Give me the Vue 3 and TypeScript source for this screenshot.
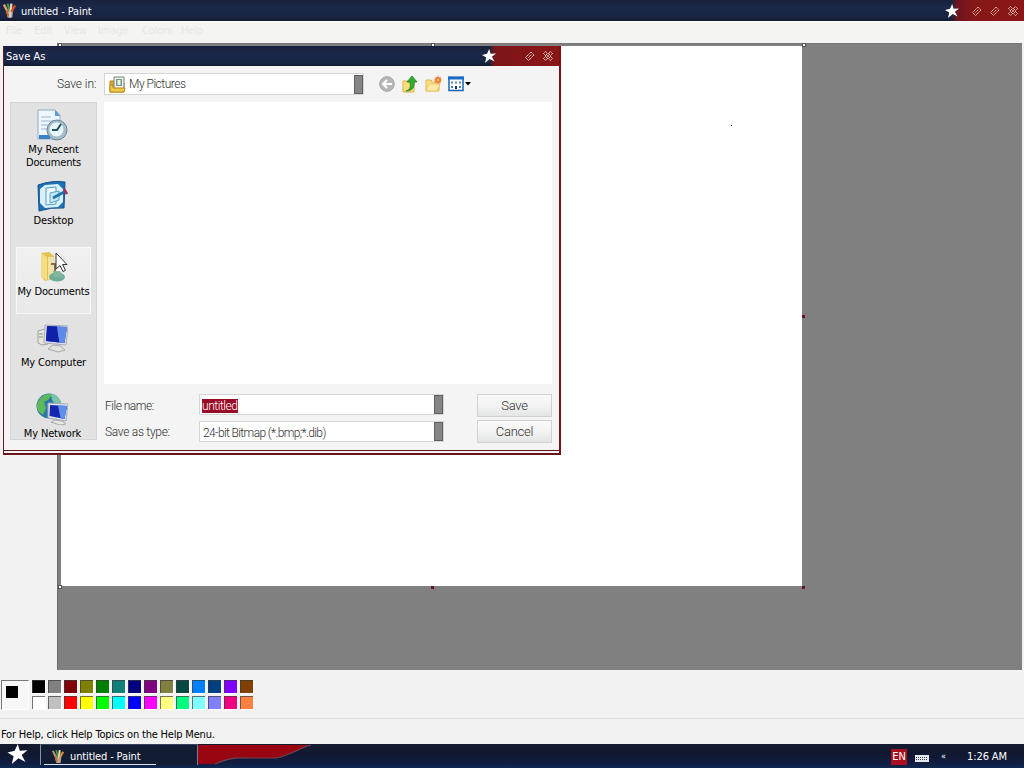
<script setup lang="ts">
interface Place {
  id: string
  lines: string[]
}

const menus: { label: string; cls: string }[] = [
  { label: 'File', cls: 'm-file' },
  { label: 'Edit', cls: 'm-edit' },
  { label: 'View', cls: 'm-view' },
  { label: 'Image', cls: 'm-image' },
  { label: 'Colors', cls: 'm-colors' },
  { label: 'Help', cls: 'm-help' },
]

const places: Place[] = [
  { id: 'recent', lines: ['My Recent', 'Documents'] },
  { id: 'desktop', lines: ['Desktop'] },
  { id: 'documents', lines: ['My Documents'] },
  { id: 'computer', lines: ['My Computer'] },
  { id: 'network', lines: ['My Network'] },
]

const palette: string[] = [
  '#000000', '#808080', '#800008', '#808000', '#008000', '#108078', '#000080',
  '#800080', '#808040', '#084840', '#0080ff', '#004080', '#8000ff', '#804000',
  '#ffffff', '#c0c0c0', '#ff0000', '#ffff00', '#00ff00', '#00ffff', '#0000ff',
  '#ff00ff', '#ffff80', '#00ff80', '#80ffff', '#8080ff', '#f00080', '#ff8040',
]

const handles: string[] = ['nw', 'n', 'ne', 'e', 'se', 's', 'sw']

const starPath = 'M7.200 0L8.600 4.800L14 4.400L9.900 7.700L12.600 12.600L7.700 10L3 14L4.300 8.600L0 6L5 4.800Z'
</script>

<template>
  <div class="screen">
    <header class="titlebar">
      <svg class="app-icon" viewBox="0 0 14 17">
        <path d="M3 8h8l-1 8H5z" fill="#b9a99a" />
        <path d="M6 9h3v7H6z" fill="#d8d0c4" />
        <path d="M1 2l4 8" stroke="#e0a060" stroke-width="2.500" />
        <path d="M5 1l2 9" stroke="#3f9a58" stroke-width="2" />
        <path d="M9 1L8 10" stroke="#e8d8a8" stroke-width="2.500" />
        <path d="M13 3L9 10" stroke="#e04828" stroke-width="2.500" />
        <path d="M4 8l2 7" stroke="#c86838" stroke-width="2" />
      </svg>
      <span class="title-text">untitled - Paint</span>
      <div class="caption">
        <svg class="star" viewBox="0 0 14 14"><path :d="starPath" fill="#fff" /></svg>
        <svg class="cap" viewBox="0 0 10 10"><path d="M.5 6.500l5.500-5.500 3 3L3.500 9.500zM3.500 6.500l3-3" fill="none" stroke="#f0c8b4" stroke-dasharray="1.500 .5" /></svg>
        <svg class="cap" viewBox="0 0 10 10"><path d="M.5 6.500l5.500-5.500 3 3L3.500 9.500zM3.500 6.500l3-3" fill="none" stroke="#f0c8b4" stroke-dasharray="1.500 .5" /></svg>
        <svg class="cap" viewBox="0 0 10 10"><path d="M.5 2.500l2-2L5 3 7.500.5l2 2L7 5l2.500 2.500-2 2L5 7 2.500 9.500l-2-2L3 5zM3 3l4 4M7 3L3 7" fill="none" stroke="#f4d4c4" stroke-dasharray="1.500 .5" /></svg>
      </div>
    </header>

    <nav class="menubar">
      <span v-for="m in menus" :key="m.label" :class="m.cls">{{ m.label }}</span>
    </nav>

    <main class="workspace">
      <div class="canvas">
        <i v-for="h in handles" :key="h" class="handle" :class="h"></i>
        <i class="speck"></i>
      </div>
    </main>

    <section class="colorbox">
      <div class="current"><i></i></div>
      <div class="swatches">
        <i v-for="c in palette" :key="c" :style="{ backgroundColor: c }"></i>
      </div>
    </section>

    <footer class="status"><span>For Help, click Help Topics on the Help Menu.</span></footer>

    <div class="taskbar">
      <div class="start">
        <svg class="start-star" viewBox="0 0 14 14"><path :d="starPath" fill="#fff" /></svg>
      </div>
      <div class="task">
        <svg class="app-icon" viewBox="0 0 14 17">
          <path d="M3 8h8l-1 8H5z" fill="#b9a99a" />
          <path d="M1 2l4 8" stroke="#c09070" stroke-width="2.500" />
          <path d="M5 1l2 9" stroke="#3f9a58" stroke-width="2" />
          <path d="M9 1L8 10" stroke="#e8d8a8" stroke-width="2.500" />
          <path d="M13 3L9 10" stroke="#d09040" stroke-width="2.500" />
          <path d="M4 8l2 7" stroke="#c86838" stroke-width="2" />
        </svg>
        <span>untitled - Paint</span>
      </div>
      <svg class="ribbon" viewBox="0 0 120 24">
        <path d="M0 1h113C101 4 93 11 78 14H50C34 13 26 16 17 20H0z" fill="#990611" />
        <path d="M113 1C101 4 93 11 78 14H50C34 13 26 16 17 20" fill="none" stroke="#6f4354" stroke-width="1.200" />
      </svg>
      <div class="tray">
        <span class="lang">EN</span>
        <svg class="kbd" viewBox="0 0 14 8"><path d="M0 1h14v7H0z" fill="#e6e8ee" /><path d="M1 3.500h12M1 5.500h12" stroke="#333a50" stroke-dasharray="1 1" /></svg>
        <span class="chev">«</span>
        <span class="clock">1:26 AM</span>
      </div>
    </div>

    <div class="dialog">
      <header class="dlg-title">
        <span>Save As</span>
        <div class="dlg-caption">
          <svg class="star" viewBox="0 0 14 14"><path :d="starPath" fill="#fff" /></svg>
          <svg class="cap" viewBox="0 0 10 10"><path d="M.5 6.500l5.500-5.500 3 3L3.500 9.500zM3.500 6.500l3-3" fill="none" stroke="#fbe6da" stroke-dasharray="1.500 .5" /></svg>
          <svg class="cap" viewBox="0 0 10 10"><path d="M.5 2.500l2-2L5 3 7.500.5l2 2L7 5l2.500 2.500-2 2L5 7 2.500 9.500l-2-2L3 5zM3 3l4 4M7 3L3 7" fill="none" stroke="#fbeae0" stroke-dasharray="1.500 .5" /></svg>
        </div>
      </header>
      <div class="dlg-body">
        <div class="look-row">
          <label class="save-in">Save in:</label>
          <div class="combo look">
            <svg class="pics" viewBox="0 0 17 17">
              <path d="M1 5h4l1 2h9v9H1z" fill="#d8a92e" stroke="#b98716" />
              <path d="M5 1h10v12H5z" fill="#f3f4e6" stroke="#758078" />
              <path d="M7 3h6v7H7z" fill="#6f9a98" />
              <path d="M8.500 4h3v5h-3z" fill="#eef4e2" />
              <path d="M1 16V9h3v3h12l-1 4z" fill="#eecb48" stroke="#b98716" />
            </svg>
            <span>My Pictures</span>
            <i class="drop"></i>
          </div>
          <div class="tools">
            <svg viewBox="0 0 18 18"><circle cx="9" cy="9" r="7.300" fill="#b8b8b8" stroke="#a2a2a2" /><path d="M14 9H6M9 5L5 9l4 4" fill="none" stroke="#fff" stroke-width="2" /></svg>
            <svg viewBox="0 0 18 18"><path d="M2 6h5l1 2h5v9H2z" fill="#f7df7c" stroke="#dcae4c" /><path d="M5 16c4-1 5-4 4-9H6l5-6 5 6h-3c1 5-2 9-8 9z" fill="#35ad32" stroke="#187e20" stroke-width=".8" /></svg>
            <svg viewBox="0 0 18 18"><path d="M2 5h5l1 2h7v9H2z" fill="#f8de86" stroke="#e0b452" /><path d="M2 16l3-7h11l-3 7z" fill="#fdeaa2" stroke="#e8bd5c" stroke-width=".7" /><circle cx="14" cy="5" r="3" fill="#f07838" /><path d="M14 .5v9M9.500 5h9M11 2l6 6M17 2l-6 6" stroke="#f07838" stroke-width=".8" /><circle cx="14" cy="5" r="1.200" fill="#ffd060" /></svg>
            <svg class="views" viewBox="0 0 24 18"><path d="M2 2.500h14v13H2z" fill="#fff" stroke="#1865bb" stroke-width="1.500" /><path d="M1 1.500h16v3H1z" fill="#176ac6" /><path d="M4 6.500h2v2H4zM8 6.500h2v2H8zM12 6.500h2v2h-2zM4 11h2v2H4zM12 11h2v2h-2z" fill="#5888a4" /><path d="M8 11h2v3H8z" fill="#1828a0" /><path d="M18 7h6l-3 3.500z" fill="#000" /></svg>
          </div>
        </div>

        <div class="middle">
          <aside class="places">
            <div v-for="p in places" :key="p.id" class="place" :class="p.id">
              <svg v-if="p.id === 'recent'" viewBox="0 0 32 32">
                <path d="M2 1h17l5 5v24H2z" fill="#eef6ff" stroke="#91acc9" />
                <path d="M19 1v6h5z" fill="#5c9bd3" />
                <path d="M5 8h10M5 12h14M5 16h8M5 20h7" stroke="#b9cbe0" stroke-width="1.500" />
                <path d="M3 26h11v4H3z" fill="#3b82ca" />
                <circle cx="21" cy="21" r="10" fill="#a5bcc8" stroke="#6f8494" />
                <circle cx="20.500" cy="20.500" r="7.500" fill="#e8f5f9" stroke="#9fbcc8" />
                <path d="M25 15l-4 6h-5" fill="none" stroke="#22535e" stroke-width="2" />
              </svg>
              <svg v-else-if="p.id === 'desktop'" viewBox="0 0 32 32">
                <path d="M2 5q14-5 27-3l-1 26q-13-1-25 3z" fill="#1e70b5" stroke="#174f8a" />
                <path d="M4 9l5-4 13-1 5 5v13l-5 5-13 1-5-5z" fill="#d8f1fc" />
                <path d="M10 8l10-1v17l-10 1z" fill="#eefaff" stroke="#4e9bc9" />
                <path d="M14 13l9-2v9l-9 3z" fill="#c4e8f4" stroke="#5ba3c8" />
                <path d="M17 18l11-6" stroke="#2273a8" stroke-width="3" />
                <path d="M28 9l3 5" stroke="#a32e5c" stroke-width="2.500" />
              </svg>
              <svg v-else-if="p.id === 'documents'" viewBox="0 0 32 32">
                <path d="M5 2l8-1 5 4v23l-9 2-4-5z" fill="#e3c052" />
                <path d="M5 2l6 4v24l-6-5z" fill="#f5dd84" />
                <path d="M12 6h8v20l-8 3z" fill="#f2e3a3" />
                <path d="M18 6h10v15H18z" fill="#f6f7f4" stroke="#d9dbd6" />
                <path d="M15 13h4v9" fill="none" stroke="#8a6a4c" stroke-width="2" />
                <ellipse cx="21" cy="26" rx="8" ry="4.500" fill="#6fae98" />
                <path d="M17 20h7l3 6h-9z" fill="#85b79e" />
              </svg>
              <svg v-else-if="p.id === 'computer'" viewBox="0 0 32 32">
                <path d="M2 9l7-2 3 2v13l-6 1-4-2z" fill="#e6e5da" stroke="#a3a39b" />
                <path d="M3 12h4M3 15h4" stroke="#888" />
                <path d="M9 3l23 1-2 19-22-2z" fill="#dcdfe8" stroke="#a8adbb" />
                <path d="M11 4l20 1-2.500 16L10 19z" fill="#1c3fca" />
                <path d="M20 4.500l11 .5-2.500 16-5-.500z" fill="#5f8be8" />
                <path d="M11 4l10 .500 2 16L10 19z" fill="#1020a8" />
                <path d="M17 23l7 1 5 4-7 2-10-3z" fill="#e4e4de" stroke="#aaa" />
              </svg>
              <svg v-else viewBox="0 0 32 32">
                <circle cx="13" cy="13" r="12.500" fill="#2a78a8" />
                <path d="M3 7C7 1 13 0 16 2l-4 5-4 2 2 6-3 7C1 19-1 13 3 7z" fill="#5eb85c" />
                <path d="M15 1c5 0 9 5 10 9l-6 1-3-4z" fill="#7cc4a8" />
                <path d="M12 10l20 1-2 17-18-3z" fill="#dfe3ec" stroke="#a5aab7" />
                <path d="M14 12l17 1-2.500 13-15-3z" fill="#1228b0" />
                <path d="M22 12.500l9 .500-2.500 13-4-1z" fill="#5f8fe8" />
                <path d="M19 27l7 1 4 3-6 1-9-3z" fill="#e8e8df" stroke="#aaa" />
              </svg>
              <span v-for="l in p.lines" :key="l">{{ l }}</span>
            </div>
          </aside>
          <div class="right">
            <div class="filelist"></div>
            <div class="form">
              <div class="labels"><label class="l-name">File name:</label><label class="l-type">Save as type:</label></div>
              <div class="fields">
                <div class="combo"><mark>untitled</mark><i class="drop"></i></div>
                <div class="combo type"><span>24-bit Bitmap (*.bmp;*.dib)</span><i class="drop"></i></div>
              </div>
              <div class="buttons"><button>Save</button><button>Cancel</button></div>
            </div>
          </div>
        </div>
      </div>
    </div>

    <svg class="cursor" viewBox="0 0 13 21"><path d="M1 1v16l4-3.500 3 6 2.500-1.200-3-5.800H12z" fill="#fff" stroke="#333" /></svg>
  </div>
</template>

<style>
html, body { margin: 0; overflow: hidden; }
</style>

<style scoped>
* { box-sizing: border-box; }
.screen {
  position: relative; width: 1024px; height: 768px; overflow: hidden;
  display: flex; flex-direction: column; background: #f2f2f2;
  font: 11px/13px "DejaVu Sans Condensed", "DejaVu Sans", sans-serif; color: #000;
}
svg { display: block; flex: none; }
.titlebar {
  height: 21px; flex: none; display: flex; align-items: center; color: #fff;
  padding-left: 3px; background: linear-gradient(#17213d, #1b2849 35%, #17233f 85%, #10182e);
}
.app-icon { width: 13px; height: 17px; }
.title-text { margin-left: 5px; padding-top: 1px; letter-spacing: -0.12px; }
.caption {
  margin-left: auto; width: 79px; height: 21px; display: flex; align-items: center;
  background: linear-gradient(90deg, transparent 6px, #6e1420 12px, #861818 30px, #8b1716);
}
.star { width: 14px; height: 14px; }
.cap { width: 10px; height: 10px; margin-left: 8px; }
.star + .cap { margin-left: 13px; }
.menubar {
  height: 22px; flex: none; display: flex; padding: 2px 0 0 6px; color: #e6e6e3;
  border-top: 1px solid #fff; background: #f4f4f2; letter-spacing: -0.15px;
}
.m-file { width: 28px; } .m-edit { width: 30px; } .m-view { width: 34px; }
.m-image { width: 44px; } .m-colors { width: 39px; }
.workspace {
  height: 627px; flex: none; margin: 0 2px 0 57px; padding: 2px 0 0 3px;
  background: #808080; border-left: 1px solid #6c6c6c; border-top: 1px solid #777;
}
.canvas { position: relative; width: 741px; height: 540px; background: #fff; }
.handle { position: absolute; width: 3px; height: 3px; background: #64142a; }
.nw, .n, .ne, .sw { background: #fff; border: 1px solid #555; width: 4px; height: 4px; }
.nw { left: -3px; top: -3px; } .n { left: 370px; top: -3px; } .ne { left: 741px; top: -3px; }
.e { left: 741px; top: 269px; } .se { left: 741px; top: 540px; }
.s { left: 370px; top: 540px; } .sw { left: -3px; top: 539px; }
.speck { position: absolute; left: 670px; top: 79px; width: 1px; height: 1px; background: #333; }
.colorbox { height: 49px; flex: none; display: flex; padding: 10px 0 0 1px; border-bottom: 1px solid #dcdcdc; }
.current {
  width: 28px; height: 30px; border: 1px solid #fff; border-top-color: #777; border-left-color: #777;
  background: #f6f7f6; padding: 5px 0 0 4px; margin-right: 3px;
}
.current i { display: block; width: 12px; height: 12px; background: #000; }
.swatches { display: grid; grid-template-columns: repeat(14, 13px); grid-auto-rows: 13px; gap: 3px; }
.swatches i {
  border-top: 1px solid rgba(60, 60, 60, .7); border-left: 1px solid rgba(60, 60, 60, .7);
  box-shadow: 1px 1px 0 #fff;
}
.status { height: 25px; flex: none; padding: 9px 0 0 1px; white-space: nowrap; }
.status span { letter-spacing: -0.19px; }
.taskbar {
  height: 24px; flex: none; display: flex; color: #fff;
  background: linear-gradient(#151c30, #101831 45%, #111d42 80%, #0c2a50);
}
.start { width: 40px; padding-left: 7px; }
.start-star { width: 21px; height: 20px; }
.task {
  width: 158px; height: 21px; display: flex; align-items: center; padding: 2px 0 0 11px; position: relative;
  border-left: 1px solid #8793a8; border-right: 1px solid #75819a; border-top: 1px solid #34425f;
  background: #121c32;
}
.task::after { content: ""; position: absolute; left: 3px; bottom: 0; width: 112px; height: 1px; background: #dce2ef; }
.task .app-icon { width: 12px; height: 15px; }
.task span { margin-left: 6px; letter-spacing: -0.13px; }
.ribbon { width: 120px; height: 24px; }
.tray { margin-left: auto; display: flex; align-items: center; padding: 1px 16px 0 0; }
.lang { width: 16px; height: 16px; line-height: 16px; text-align: center; background: #a90f20; }
.kbd { width: 14px; height: 8px; margin: 3px 0 0 8px; }
.chev { margin-left: 12px; width: 8px; font-size: 9px; }
.clock { margin-left: 18px; width: 41px; white-space: nowrap; letter-spacing: -0.1px; }

.dialog {
  position: absolute; left: 3px; top: 46px; width: 558px; height: 409px; background: #f4f4f4;
  border: 1px solid #6c1c20; border-right: 2px solid #7a1018; border-top: 0; border-bottom: 2px solid #68151c;
}
.dlg-title {
  height: 20px; display: flex; align-items: center; color: #fff; padding-left: 2px;
  background: linear-gradient(#18203b, #1c294a 40%, #182442 85%, #11182d);
}
.dlg-title > span { letter-spacing: 0; }
.dlg-caption {
  margin-left: auto; width: 77px; height: 20px; display: flex; align-items: center;
  background: linear-gradient(90deg, transparent 7px, #7d1519 13px, #8b1616);
}
.dlg-caption .star + .cap { margin-left: 29px; }
.dlg-body { height: 385px; padding: 6px 6px 0 6px; border-bottom: 1px solid #64131b; }
.look-row { height: 30px; display: flex; }
.save-in { width: 94px; padding: 5px 0 0 47px; letter-spacing: -0.1px; }
.save-in, .labels, .combo, button {
  color: #303030; font: 300 12px/14px Roboto, "Open Sans", sans-serif; white-space: nowrap;
}
.combo {
  height: 21px; display: flex; align-items: center; background: #fff; border: 1px solid #d2d7d6;
}
.drop { display: block; margin-left: auto; width: 9px; height: 19px; background: #858585; border: 1px solid #606060; flex: none; }
.look { width: 260px; height: 22px; margin-top: 1px; padding-left: 4px; }
.look span { margin-left: 3px; letter-spacing: -0.5px; }
.pics { width: 17px; height: 17px; }
.tools { display: flex; gap: 5px; padding: 3px 0 0 14px; }
.tools svg { width: 18px; height: 18px; }
.tools .views { width: 24px; }
.middle { display: flex; }
.places {
  width: 87px; height: 338px; overflow: hidden; background: #e2e2e2; border: 1px solid #d0d5da;
  padding: 2px 5px 0;
}
.place { height: 67px; margin-bottom: 4px; display: flex; flex-direction: column; align-items: center; padding-top: 3px; border: 1px solid transparent; }
.place svg { width: 32px; height: 32px; margin: 0 3px 2px 0; }
.place span { letter-spacing: -0.15px; white-space: nowrap; }
.network span { margin-left: -2px; }
.documents { background: linear-gradient(#f0f0f0, #e9e9e9); border-color: #f8f8f8; }
.right { width: 448px; margin-left: 7px; }
.filelist { height: 282px; background: #fff; }
.form { display: flex; padding-top: 10px; }
.labels { width: 95px; display: flex; flex-direction: column; gap: 12px; padding: 5px 0 0 1px; }
.l-name { letter-spacing: -0.5px; }
.l-type { letter-spacing: -0.3px; }
.fields { width: 245px; display: flex; flex-direction: column; gap: 6px; }
.fields .combo { padding-left: 2px; }
mark { background: #990c28; color: #fff; letter-spacing: -0.45px; position: relative; top: 1px; }
.fields .type span { margin-left: 1px; padding-top: 2px; letter-spacing: -0.62px; }
.buttons { margin-left: 33px; display: flex; flex-direction: column; gap: 3px; }
button {
  width: 75px; height: 23px; padding: 0; border: 1px solid #cfd2d2; border-radius: 0;
  background: linear-gradient(#fafafa, #f2f2f2 55%, #e3e4e4); font-size: 13px; letter-spacing: -0.25px;
}
.cursor { position: absolute; left: 55px; top: 252px; width: 13px; height: 21px; }
</style>
